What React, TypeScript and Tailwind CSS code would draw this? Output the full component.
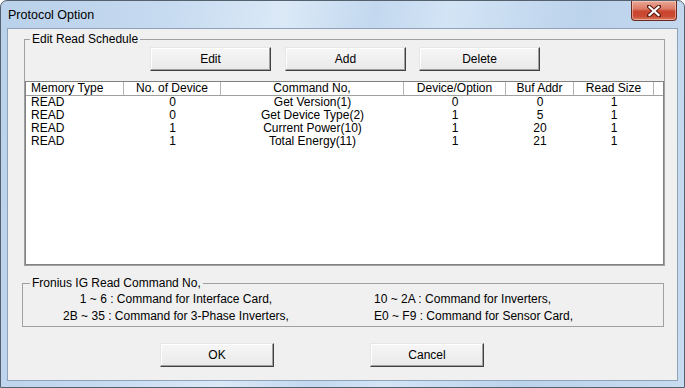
import React from "react";

const btn =
  "h-[24px] flex items-center justify-center text-[12px] text-black bg-[linear-gradient(#f6f6f6,#e9e9e9)] border border-t-[#e6e6e6] border-l-[#e6e6e6] border-r-[#404040] border-b-[#404040] shadow-[inset_-1px_-1px_0_#a0a0a0,inset_1px_1px_0_#ffffff]";

const cols = [
  { name: "Memory Type", w: "w-[98px]", align: "left" },
  { name: "No. of Device", w: "w-[97px]", align: "center" },
  { name: "Command No,", w: "w-[183px]", align: "center" },
  { name: "Device/Option", w: "w-[102px]", align: "center" },
  { name: "Buf Addr", w: "w-[68px]", align: "center" },
  { name: "Read Size", w: "w-[80px]", align: "center" },
];

const rows = [
  ["READ", "0", "Get Version(1)", "0", "0", "1"],
  ["READ", "0", "Get Device Type(2)", "1", "5", "1"],
  ["READ", "1", "Current Power(10)", "1", "20", "1"],
  ["READ", "1", "Total Energy(11)", "1", "21", "1"],
];

export default function App() {
  return (
    <div className="w-[685px] h-[388px] flex flex-col rounded-t-[7px] border border-[#56616e] bg-[linear-gradient(100deg,#b9d1ea_0%,#c6daf0_22%,#dbe9f7_38%,#c3d8ef_50%,#d3e4f5_60%,#bcd3ec_78%,#c8dbef_100%)] font-['Liberation_Sans',Arial,sans-serif] overflow-hidden">
      {/* title bar */}
      <div className="h-[27px] flex items-start justify-between">
        <div className="pl-[7px] pt-[6px] text-[12.5px] leading-[16px] text-black">
          Protocol Option
        </div>
        <div className="mr-[7px] w-[46px] h-[20px] rounded-b-[4px] border border-t-0 border-[#6a2a1f] bg-[linear-gradient(#e9a897_0%,#dc7d68_40%,#c9452f_55%,#c94a33_80%,#db7a60_100%)] shadow-[inset_0_0_0_1px_rgba(255,220,210,0.5)] flex items-center justify-center">
          <svg width="14" height="12" viewBox="0 0 14 12">
            <path
              d="M2 1.5 L12 10.5 M12 1.5 L2 10.5"
              stroke="#5a1c12"
              strokeWidth="4.2"
              strokeLinecap="square"
            />
            <path
              d="M2.5 2 L11.5 10 M11.5 2 L2.5 10"
              stroke="#ffffff"
              strokeWidth="2.2"
              strokeLinecap="square"
            />
          </svg>
        </div>
      </div>

      {/* client */}
      <div className="flex-1 mx-[6px] mb-[6px] border border-[#8ea3b9] bg-[#f0f0f0] flex flex-col pl-[14px] pr-[12px] pt-[3px] text-[12px] text-black">
        {/* group 1 */}
        <fieldset className="ml-[2px] border border-[#a0a0a0] p-0 m-0 min-w-0">
          <legend className="ml-[5px] px-[2px] leading-[14px] text-[12px]">
            Edit Read Schedule
          </legend>
          <div className="flex mt-[1px] pl-[125px]">
            <button className={`${btn} w-[121px]`}>Edit</button>
            <button className={`${btn} w-[121px] ml-[14px]`}>Add</button>
            <button className={`${btn} w-[121px] ml-[13px]`}>Delete</button>
          </div>
          <div className="mt-[10px] h-[184px] border border-[#828282] bg-white flex flex-col">
            <div className="flex h-[14px] border-b border-[#a0a0a0] leading-[13px]">
              {cols.map((c, i) => (
                <div
                  key={i}
                  className={`${c.w} shrink-0 border-r border-[#b4b4b4] ${
                    c.align === "left" ? "text-left pl-[5px]" : "text-center"
                  } whitespace-nowrap overflow-hidden`}
                >
                  {c.name}
                </div>
              ))}
              <div className="flex-1" />
            </div>
            {rows.map((r, ri) => (
              <div key={ri} className="flex h-[13px] leading-[13px]">
                {r.map((v, ci) => (
                  <div
                    key={ci}
                    className={`${cols[ci].w} shrink-0 ${
                      ci === 0 ? "text-left pl-[5px]" : "text-center"
                    } whitespace-nowrap`}
                  >
                    {v}
                  </div>
                ))}
              </div>
            ))}
          </div>
        </fieldset>

        {/* group 2 */}
        <fieldset className="mt-[10px] mr-[1px] border border-[#a0a0a0] p-0 m-0 min-w-0 pb-[1px]">
          <legend className="ml-[7px] px-[2px] leading-[14px] text-[12px]">
            Fronius IG Read Command No,
          </legend>
          <div className="flex leading-[17px] pt-[1px]">
            <div className="w-[306px] text-center">
              <div>1 ~ 6 : Command for Interface Card,</div>
              <div>2B ~ 35 : Command for 3-Phase Inverters,</div>
            </div>
            <div className="ml-[45px]">
              <div>10 ~ 2A : Command for Inverters,</div>
              <div>E0 ~ F9 : Command for Sensor Card,</div>
            </div>
          </div>
        </fieldset>

        {/* buttons */}
        <div className="flex mt-[16px] pl-[138px]">
          <button className={`${btn} w-[114px]`}>OK</button>
          <button className={`${btn} w-[114px] ml-[96px]`}>Cancel</button>
        </div>
      </div>
    </div>
  );
}
